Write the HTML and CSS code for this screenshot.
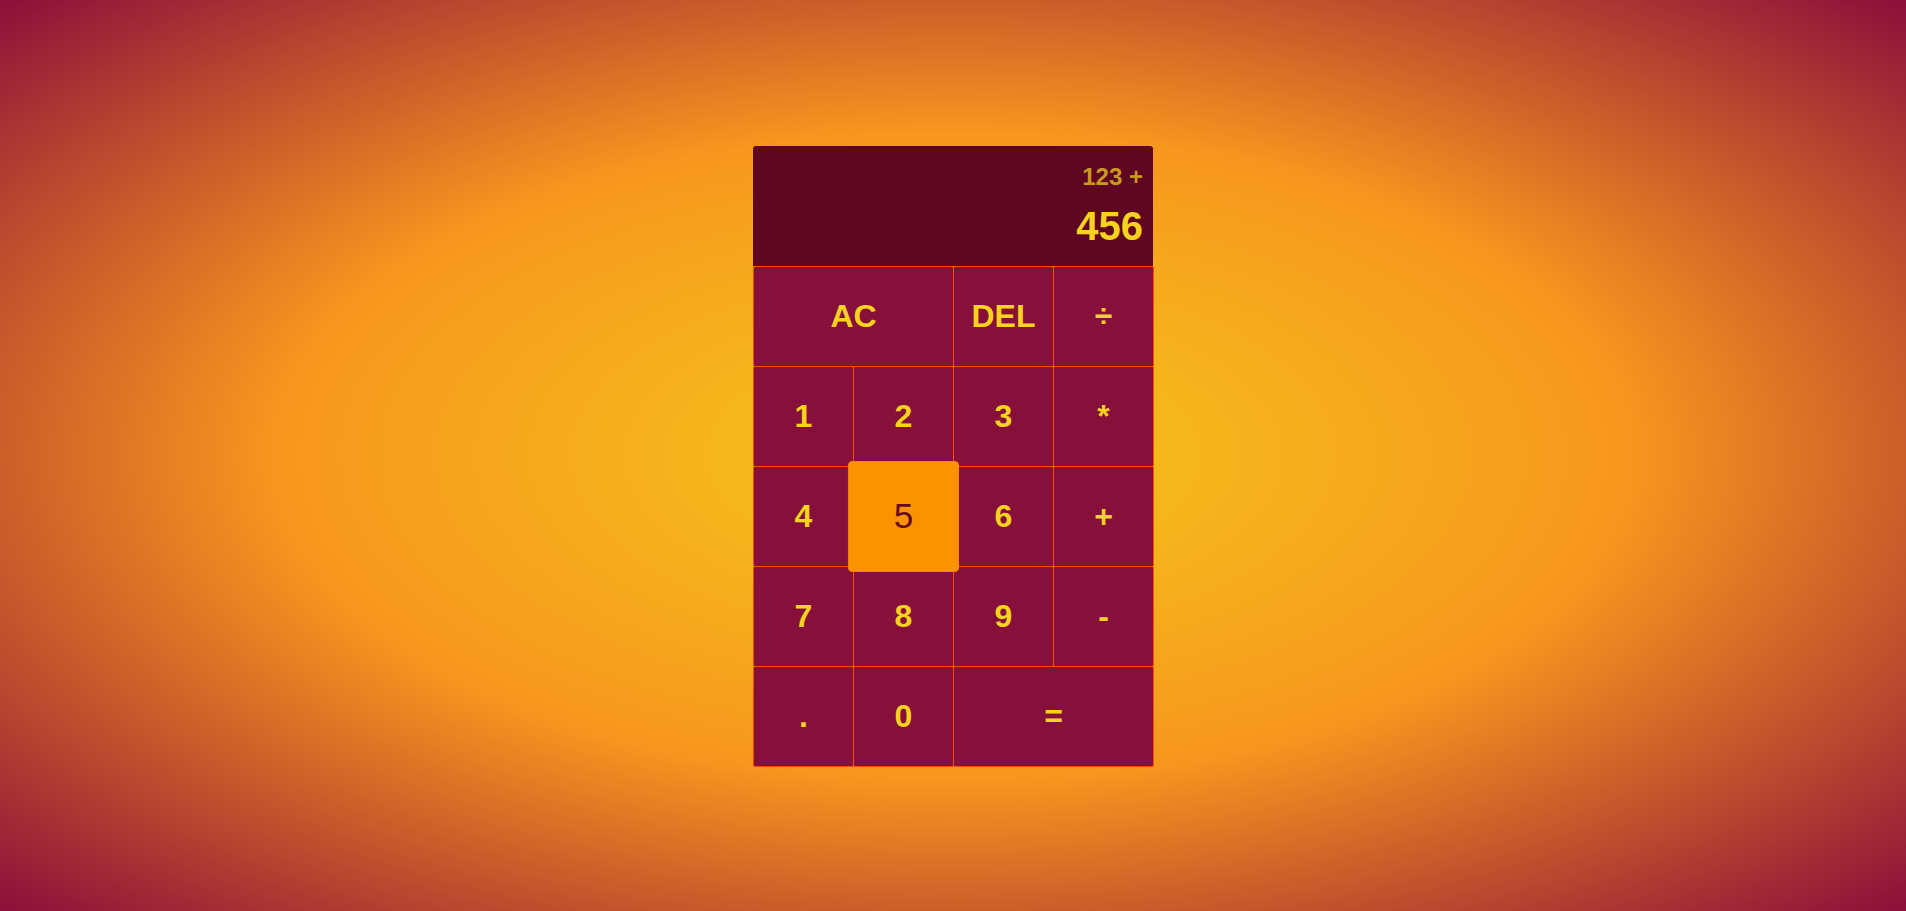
FILE: index.html
```html
<!DOCTYPE html>
<html lang="en">
<head>
<meta charset="utf-8">
<title>Calculator</title>
<link rel="stylesheet" href="styles.css">
</head>
<body>
<div class="calculator-grid">
  <div class="output">
    <div class="previous-operand">123 +</div>
    <div class="current-operand">456</div>
  </div>
  <button class="span-two">AC</button>
  <button>DEL</button>
  <button>÷</button>
  <button>1</button>
  <button>2</button>
  <button>3</button>
  <button>*</button>
  <button>4</button>
  <button class="hovered">5</button>
  <button>6</button>
  <button>+</button>
  <button>7</button>
  <button>8</button>
  <button>9</button>
  <button>-</button>
  <button>.</button>
  <button>0</button>
  <button class="span-two">=</button>
</div>
</body>
</html>
```
FILE: styles.css
```css
*, *::before, *::after {
  box-sizing: border-box;
  font-family: "Liberation Sans", Arial, Helvetica, sans-serif;
  font-weight: bold;
}

html, body {
  margin: 0;
  padding: 0;
}

body {
  min-height: 100vh;
  background: radial-gradient(ellipse at center, #f5c71a 0%, #f7971e 50%, #8a0f3b 100%);
}

.calculator-grid {
  display: grid;
  justify-content: center;
  align-content: center;
  min-height: 100vh;
  padding-top: 1px;
  grid-template-columns: repeat(4, 100px);
  grid-template-rows: minmax(120px, auto) repeat(5, 100px);
}

.calculator-grid > button {
  cursor: pointer;
  font-size: 2rem;
  color: #f7d21e;
  border: 1px solid #ff4800;
  border-radius: 2px;
  margin: 0 -1px -1px 0;
  outline: none;
  background-color: #87103a;
  padding: 0;
}

.calculator-grid > button.hovered {
  background-color: #fb9300;
  border-color: #f08500;
  color: #650a22;
  font-weight: normal;
  border-radius: 4px;
  transform: scale(1.1);
}

.span-two {
  grid-column: span 2;
}

.output {
  grid-column: 1 / -1;
  background-color: #5f0620;
  border-radius: 3px 3px 0 0;
  display: flex;
  align-items: flex-end;
  justify-content: space-around;
  flex-direction: column;
  padding: 10px;
  word-wrap: break-word;
  word-break: break-all;
}

.previous-operand {
  color: #c89a22;
  font-size: 1.5rem;
}

.current-operand {
  color: #f7d21e;
  font-size: 2.5rem;
}
```
